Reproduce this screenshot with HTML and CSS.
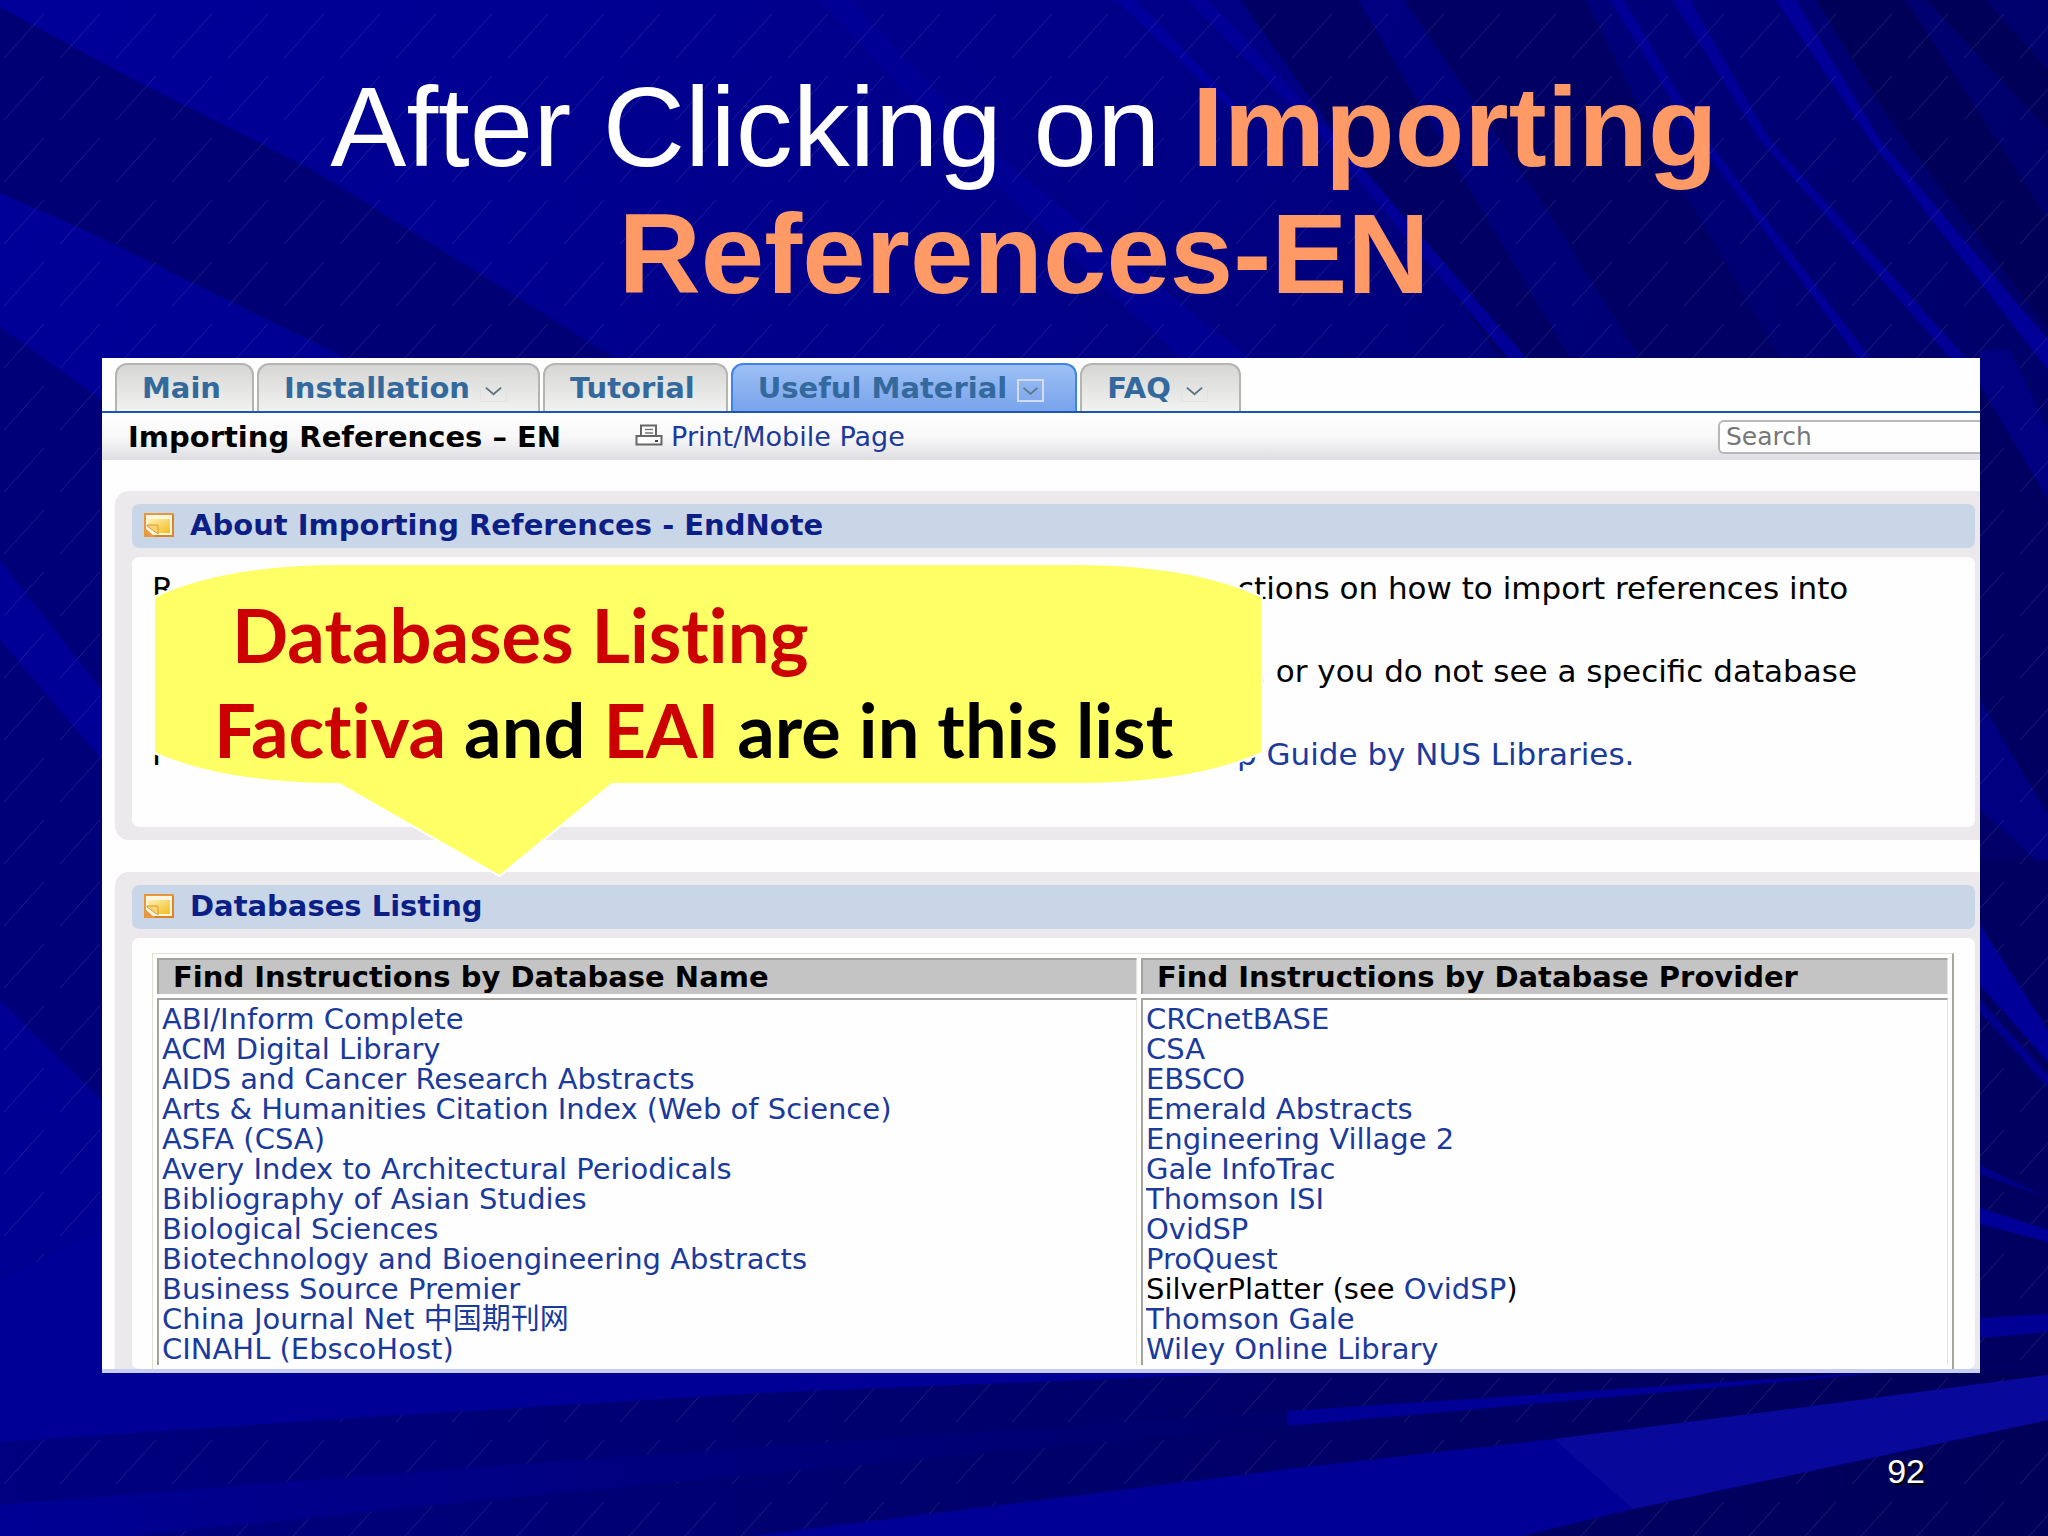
FILE: index.html
```html
<!DOCTYPE html>
<html lang="en">
<head>
  <meta charset="UTF-8">
  <meta name="viewport" content="width=device-width, initial-scale=1.0">
  <title>After Clicking on Importing References-EN</title>
  <link rel="stylesheet" href="styles.css">
</head>
<body>
  <!-- light beams behind the slide -->
  <svg class="backdrop" viewBox="0 0 2048 1536" preserveAspectRatio="none" aria-hidden="true">
    <defs>
      <linearGradient id="base" x1="0" y1="0" x2="1" y2="0.3">
        <stop offset="0" stop-color="#00009a"/>
        <stop offset="0.5" stop-color="#000088"/>
        <stop offset="1" stop-color="#000068"/>
      </linearGradient>
      <linearGradient id="floor" x1="0" y1="0" x2="1" y2="0">
        <stop offset="0" stop-color="#000080"/>
        <stop offset="1" stop-color="#000058"/>
      </linearGradient>
      <linearGradient id="midbeam" x1="0" y1="0" x2="1" y2="0">
        <stop offset="0" stop-color="#000094"/>
        <stop offset="1" stop-color="#00006a"/>
      </linearGradient>
      <pattern id="rain" width="56" height="62" patternUnits="userSpaceOnUse">
        <path d="M4 58L44 14" stroke="#8080c0" stroke-width="1" opacity="0.22"/>
      </pattern>
    </defs>
    <rect width="2048" height="1536" fill="url(#base)"/>
    <path d="M820 0H850L990 150L1250 358H1180L960 150Z" fill="#00009c" opacity="0.6"/>
    <path d="M0 7L130 78L313 170L614 358H346L91 233L0 193Z" fill="#000074"/>
    <path d="M0 327L102 400V1100L0 1000Z" fill="#000078"/>
    <path d="M0 560L102 690V760L0 640Z" fill="#000096"/>
    <path d="M1240 0H1358L1476 200L1570 358H1500L1340 140Z" fill="#000064"/>
    <path d="M1404 0H1586L1660 150L1780 358H1640L1540 200Z" fill="#000064"/>
    <path d="M1116 0H1136L1250 120L1240 118Z" fill="#00009c"/>
    <path d="M1188 0H1208L1330 130L1526 358H1508L1320 135Z" fill="#000096"/>
    <path d="M1610 0H1624L1700 130L1870 358H1858L1690 130Z" fill="#000096"/>
    <path d="M1672 0H1690L1770 140L1966 358H1950L1760 140Z" fill="#000096"/>
    <path d="M1776 0H1796L1880 140L2048 340V370L1870 140Z" fill="#000098"/>
    <path d="M1816 0H1906L1990 130L2048 220V330L1890 120Z" fill="#000058"/>
    <path d="M1926 0H1986L2048 70V130Z" fill="#000058"/>
    <path d="M1980 380L2048 500V840L1980 760Z" fill="#000060"/>
    <path d="M1980 350H2010L2048 430V500L1980 385Z" fill="#000080"/>
    <path d="M1980 700L2048 815V870L1980 810Z" fill="#000080"/>
    <path d="M1980 860H2048V1536H1980Z" fill="#000060"/>
    <rect y="1372" width="2048" height="164" fill="url(#floor)"/>
    <rect width="2048" height="1536" fill="url(#rain)"/>
    <path d="M1980 925L2048 1030V1062L1980 985Z" fill="#000099"/>
    <path d="M1980 1000L2048 1075V1088L1980 1012Z" fill="#00008c"/>
    <path d="M1980 1165L2048 1198L1980 1174Z" fill="#000088"/>
    <path d="M1980 1208L2048 1230V1242L1980 1224Z" fill="#000099"/>
    <path d="M1980 1318L2048 1314V1332L1980 1338Z" fill="#000094"/>
    <path d="M0 1280L102 1230V1372H1280L760 1393L370 1417L0 1442Z" fill="#000096"/>
    <path d="M0 1505L190 1489L600 1458L1100 1424L1287 1411V1425L601 1489L130 1536H0Z" fill="url(#midbeam)"/>
    <path d="M1287 1411L1860 1373H1880L1287 1426Z" fill="#000096"/>
    <path d="M752 1536L1287 1469L1554 1439L1829 1404L2048 1375V1420L1633 1509L1522 1536Z" fill="#000096"/>
    <path d="M1554 1439L1829 1404L2048 1375V1420L1633 1509Z" fill="#08089a"/>
  </svg>

  <main class="slide">
    <h1>After Clicking on <strong>Importing</strong><br><strong>References-EN</strong></h1>

    <div class="panel">
      <nav class="tabs">
        <a href="#">Main</a>
        <a href="#">Installation <svg class="chevron" viewBox="0 0 26 22"><path d="M5 8L13 15L21 8"/></svg></a>
        <a href="#">Tutorial</a>
        <a href="#" class="active">Useful Material <svg class="chevron" viewBox="0 0 26 22"><path d="M5 8L13 15L21 8"/></svg></a>
        <a href="#">FAQ <svg class="chevron" viewBox="0 0 26 22"><path d="M5 8L13 15L21 8"/></svg></a>
      </nav>

      <div class="subbar">
        <strong>Importing References – EN</strong>
        <a href="#" class="print">
          <svg viewBox="0 0 28 22">
            <path d="M6 12V1.500H21V12M1.500 12H26.500V20.500H1.500Z" fill="#fff" stroke="#666" stroke-width="2"/>
            <path d="M10 5.500H18M10 9H18" stroke="#777" stroke-width="1.500"/>
            <path d="M20 17H23" stroke="#444" stroke-width="2"/>
          </svg>
          Print/Mobile Page
        </a>
        <input type="text" class="search" placeholder="Search" aria-label="Search">
      </div>

      <section class="box">
        <h2>
          <svg class="note" viewBox="0 0 30 24"><use href="#noteIcon"/></svg>
          About Importing References - EndNote
        </h2>
        <div class="box-body about">
          <p><span>R</span><span>ctions on how to import references into</span></p>
          <p><span></span><span>e, or you do not see a specific database</span></p>
          <p><span>F</span><a href="#">p Guide by NUS Libraries.</a></p>
        </div>
        <div class="callout">
          <svg viewBox="0 0 1108 314" preserveAspectRatio="none" aria-hidden="true">
            <path d="M1 34Q70 1 188 1H920Q1038 1 1107 34V190Q1038 221 920 221H458L346 313L186 221Q70 221 1 190Z"/>
          </svg>
          <div class="callout-text">
            <div class="first"><em>Databases Listing</em></div>
            <div><em>Factiva</em> and <em>EAI</em> are in this list</div>
          </div>
        </div>
      </section>

      <section class="box last">
        <h2>
          <svg class="note" viewBox="0 0 30 24">
            <defs>
              <linearGradient id="gold" x1="0" y1="0" x2="1" y2="1">
                <stop offset="0" stop-color="#fff0b0"/>
                <stop offset="1" stop-color="#f3bd20"/>
              </linearGradient>
            </defs>
            <g id="noteIcon">
              <rect x="1" y="1" width="28" height="22" fill="#fff6e0" stroke="#e8963a" stroke-width="2"/>
              <path d="M4 6H26V20H14V12H4Z" fill="url(#gold)"/>
              <path d="M3 12H14V21L3 13Z" fill="#f8d56a" stroke="#d99a3c"/>
              <path d="M1 15L10 23H1Z" fill="#e39a45"/>
              <path d="M29 2V23H11" fill="none" stroke="#df8420" stroke-width="2"/>
            </g>
          </svg>
          Databases Listing
        </h2>
        <div class="box-body listing">
          <table>
            <thead>
              <tr>
                <th>Find Instructions by Database Name</th>
                <th>Find Instructions by Database Provider</th>
              </tr>
            </thead>
            <tbody>
              <tr>
                <td>
                  <ul>
                    <li><a href="#">ABI/Inform Complete</a></li>
                    <li><a href="#">ACM Digital Library</a></li>
                    <li><a href="#">AIDS and Cancer Research Abstracts</a></li>
                    <li><a href="#">Arts &amp; Humanities Citation Index (Web of Science)</a></li>
                    <li><a href="#">ASFA (CSA)</a></li>
                    <li><a href="#">Avery Index to Architectural Periodicals</a></li>
                    <li><a href="#">Bibliography of Asian Studies</a></li>
                    <li><a href="#">Biological Sciences</a></li>
                    <li><a href="#">Biotechnology and Bioengineering Abstracts</a></li>
                    <li><a href="#">Business Source Premier</a></li>
                    <li><a href="#">China Journal Net <span lang="zh">中国期刊网</span></a></li>
                    <li><a href="#">CINAHL (EbscoHost)</a></li>
                  </ul>
                </td>
                <td>
                  <ul>
                    <li><a href="#">CRCnetBASE</a></li>
                    <li><a href="#">CSA</a></li>
                    <li><a href="#">EBSCO</a></li>
                    <li><a href="#">Emerald Abstracts</a></li>
                    <li><a href="#">Engineering Village 2</a></li>
                    <li><a href="#">Gale InfoTrac</a></li>
                    <li><a href="#">Thomson ISI</a></li>
                    <li><a href="#">OvidSP</a></li>
                    <li><a href="#">ProQuest</a></li>
                    <li>SilverPlatter (see <a href="#">OvidSP</a>)</li>
                    <li><a href="#">Thomson Gale</a></li>
                    <li><a href="#">Wiley Online Library</a></li>
                  </ul>
                </td>
              </tr>
            </tbody>
          </table>
        </div>
      </section>
    </div>

    <footer>92</footer>
  </main>
</body>
</html>
```
FILE: styles.css
```css
* {
  box-sizing: border-box;
}
body {
  margin: 0;
  min-height: 100vh;
  background: #000080;
  font-family: "DejaVu Sans", Verdana, "Noto Sans CJK SC", sans-serif;
  font-size: 29px;
  position: relative;
  overflow-x: hidden;
}
a {
  color: #1a3a9c;
  text-decoration: none;
}
a:hover {
  text-decoration: underline;
}
.backdrop {
  position: absolute;
  inset: 0;
  width: 100%;
  height: 100%;
}
.slide {
  position: relative;
  padding: 63px 68px 0 102px;
}
h1 {
  margin: 0 0 41px;
  padding-right: 34px;
  font-family: "Liberation Sans", Arial, sans-serif;
  font-size: 114px;
  font-weight: normal;
  line-height: 127px;
  text-align: center;
  color: #fff;
}
h1 strong {
  color: #ff9966;
}

/* captured web page */
.panel {
  background: #fefefe;
  border-bottom: 4px solid #c5cdf2;
  overflow: hidden;
}
.tabs {
  display: flex;
  gap: 3px;
  padding: 5px 13px 0;
  border-bottom: 2px solid #1c56b4;
}
.tabs a {
  display: flex;
  align-items: center;
  gap: 10px;
  height: 48px;
  padding: 0 31px 0 25px;
  border: 2px solid #b4b4b2;
  border-bottom: none;
  border-radius: 12px 12px 0 0;
  background: linear-gradient(#d6d6d4, #f2f2f0);
  color: #33699c;
  font-size: 29px;
  font-weight: bold;
}
.tabs a.active {
  background: linear-gradient(#9dbff4, #78a4ec);
  border-color: #3f83e6;
}
.chevron {
  width: 27px;
  height: 23px;
  margin-top: 4px;
  border: 1px solid #e2e2e2;
  fill: none;
  stroke: #5c7686;
  stroke-width: 2;
}
.active .chevron {
  border: 2px solid #d4dcec;
}
.subbar {
  display: flex;
  align-items: center;
  height: 47px;
  padding-left: 26px;
  background: linear-gradient(#fff, #f8f8f9 50%, #dedee3);
}
.print {
  display: flex;
  align-items: center;
  gap: 8px;
  margin-left: 74px;
  font-size: 27px;
}
.print svg {
  width: 28px;
  height: 22px;
  margin-bottom: 4px;
}
.search {
  width: 262px;
  height: 34px;
  margin-left: auto;
  padding: 0 6px;
  border: 2px solid #b8b8b8;
  border-right: none;
  border-radius: 6px 0 0 6px;
  background: #fefefe;
  font-family: inherit;
  font-size: 25px;
}
.search::placeholder {
  color: #777;
}

.box {
  position: relative;
  margin: 31px 0 0 13px;
  padding: 13px 5px 13px 17px;
  border-radius: 14px 0 0 14px;
  background: #ebe9eb;
}
.box.last {
  margin-top: 32px;
  padding-bottom: 0;
  border-radius: 14px 0 0 0;
}
.box h2 {
  display: flex;
  align-items: center;
  gap: 16px;
  height: 44px;
  margin: 0 0 9px;
  padding: 0 12px 2px;
  border-radius: 7px;
  background: #c9d6e7;
  color: #0c1f86;
  font-size: 29px;
}
.note {
  width: 30px;
  height: 24px;
}
.box-body {
  border-radius: 7px;
  background: #fefefe;
}
.about {
  height: 270px;
  padding: 10px 20px;
  font-size: 31px;
}
.about p {
  display: grid;
  grid-template-columns: 1085px 1fr;
  margin: 0;
  height: 83px;
  line-height: 42px;
  white-space: nowrap;
}

/* callout over the first box */
.callout {
  position: absolute;
  top: 72px;
  left: 38px;
  width: 1110px;
  height: 314px;
  z-index: 1;
}
.callout svg {
  display: block;
  width: 100%;
  height: 100%;
  fill: #ffff66;
  stroke: #fff;
  stroke-width: 2;
}
.callout-text {
  position: absolute;
  inset: 24px 0 auto 61px;
  font-family: Lato, Carlito, sans-serif;
  font-size: 74px;
  font-weight: bold;
  font-variant-ligatures: none;
  line-height: 95px;
  white-space: nowrap;
  color: #000;
}
.callout-text .first {
  padding-left: 18px;
}
.callout-text em {
  font-style: normal;
  color: #cc0000;
}

.listing {
  padding: 15px 21px 0 20px;
}
table {
  width: 100%;
  border: 1px solid #e2e2d2;
  border-right: 2px solid #a8a89c;
  border-bottom: none;
  border-spacing: 4px;
  table-layout: fixed;
}
th,
td {
  padding: 0;
  border-top: 2px solid #a4a49c;
  border-left: 2px solid #a4a49c;
  border-right: 1px solid #e4e4d8;
  text-align: left;
  vertical-align: top;
}
th:first-child {
  width: 980px;
}
th {
  height: 36px;
  padding-left: 14px;
  background: #c4c4c4;
  color: #000;
  line-height: 34px;
}
table ul {
  list-style: none;
  margin: 0;
  padding: 4px 3px 1px;
}
table li {
  height: 30px;
  line-height: 30px;
  white-space: nowrap;
}
footer {
  padding: 78px 55px 0;
  font-family: "Liberation Sans", Arial, sans-serif;
  font-size: 34px;
  line-height: 40px;
  text-align: right;
  color: #fff;
  text-shadow: 2px 2px 2px #000;
}
```
